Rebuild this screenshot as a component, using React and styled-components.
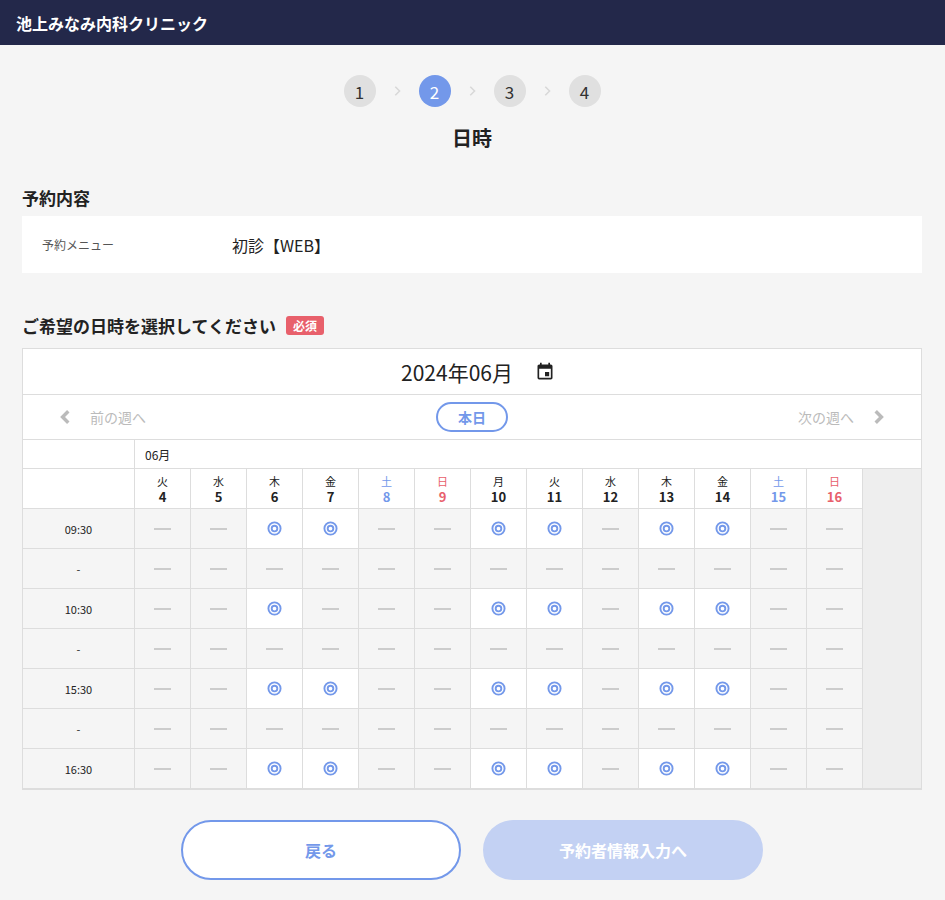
import React from 'react';
import styled, {createGlobalStyle} from 'styled-components';

const Global = createGlobalStyle`
  body { margin: 0; background: #f5f5f5; font-family: 'Noto Sans CJK JP', 'Noto Sans', sans-serif; color: #222; }
`;

const Header = styled.div`
  height: 45px; background: #23284a; color: #fff; font-weight: 700; font-size: 16px;
  display: flex; align-items: center; padding-left: 16px;
`;
const Main = styled.div`padding: 0 23px 0 22px;`;
const Steps = styled.div`display: flex; justify-content: center; align-items: center; margin-top: 30px;`;
const Step = styled.div`
  width: 32px; height: 32px; border-radius: 50%; display: flex; align-items: center; justify-content: center;
  font-size: 17px; background: ${p => p.$active ? '#7398ea' : '#e0e0e0'}; color: ${p => p.$active ? '#fff' : '#333'};
`;
const Chev = styled.span`width: 43px; display: flex; justify-content: center;`;
const Title = styled.h1`text-align: center; font-size: 20px; font-weight: 700; margin: 16px 0 33px;`;
const Section = styled.h2`font-size: 17px; font-weight: 700; margin: 0 0 6px; display: flex; align-items: center; gap: 10px;`;
const Req = styled.span`background: #e8606b; color: #fff; font-size: 12px; padding: 1px 7px; border-radius: 3px;`;
const MenuBox = styled.div`background: #fff; height: 57px; display: flex; align-items: center; padding-left: 20px; margin-bottom: 40px;`;
const MenuLabel = styled.span`font-size: 12px; color: #555; width: 190px;`;
const MenuVal = styled.span`font-size: 16px;`;
const Cal = styled.div`background: #fff; border: 1px solid #ddd; margin-top: 10px;`;
const Month = styled.div`height: 45px; display: flex; justify-content: center; align-items: center; gap: 22px; font-size: 21px; border-bottom: 1px solid #ddd; padding-left: 12px;`;
const Nav = styled.div`height: 44px; display: flex; align-items: center; justify-content: space-between; padding: 0 35px; border-bottom: 1px solid #ddd; font-size: 14px; color: #bbb;`;
const NavSide = styled.span`display: flex; align-items: center; gap: 16px;`;
const Today = styled.span`border: 2px solid #7398ea; color: #7398ea; border-radius: 16px; padding: 3px 20px; font-size: 14px; font-weight: 700;`;
const Grid = styled.div`display: grid; grid-template-columns: 112px repeat(13, 56px) 1fr;`;
const Cell = styled.div`
  box-sizing: border-box; border-right: 1px solid #ddd; border-bottom: 1px solid #ddd; height: ${p => p.$h}px;
  background: ${p => p.$bg || '#fff'}; display: flex; align-items: center; justify-content: center;
  font-size: 11px; color: ${p => p.$c || '#222'};
`;
const MonthCell = styled.div`box-sizing: border-box; grid-column: 2 / 16; height: 29px; border-bottom: 1px solid #ddd; font-size: 12px; display: flex; align-items: center; padding-left: 10px;`;
const DayCell = styled(Cell)`flex-direction: column; line-height: 16px;`;
const DayNum = styled.span`font-size: 13px; font-weight: 700;`;
const Filler = styled.div`grid-column: 15; grid-row: 2 / span 8; background: #eee; border-bottom: 1px solid #ddd;`;
const Dash = styled.span`width: 17px; height: 2px; background: #ccc;`;
const Buttons = styled.div`display: flex; justify-content: center; gap: 22px; margin: 30px 0 24px;`;
const Btn = styled.button`
  width: 280px; height: 60px; border-radius: 30px; font-family: inherit; font-size: 16px; font-weight: 700;
  border: 2px solid ${p => p.$primary ? '#c3d1f3' : '#7398ea'}; background: ${p => p.$primary ? '#c3d1f3' : '#fff'};
  color: ${p => p.$primary ? '#fff' : '#7398ea'};
`;

const days = [['火',4],['水',5],['木',6],['金',7],['土',8],['日',9],['月',10],['火',11],['水',12],['木',13],['金',14],['土',15],['日',16]];
const open = [2,3,6,7,9,10];
const rows = [['09:30',open],['-',[]],['10:30',[2,6,7,9,10]],['-',[]],['15:30',open],['-',[]],['16:30',open]];
const dayColor = d => d === '土' ? '#7398ea' : d === '日' ? '#e8606b' : '#222';

const Ring = () => (
  <svg width="15" height="15" viewBox="0 0 16 16"><circle cx="8" cy="8" r="6.5" fill="none" stroke="#7398ea" strokeWidth="2"/><circle cx="8" cy="8" r="3" fill="none" stroke="#7398ea" strokeWidth="2"/></svg>
);
const Arrow = ({d, c = '#bbb', w = 3, s = 16}) => (
  <svg width={s} height={s} viewBox="0 0 14 14"><path d={d} fill="none" stroke={c} strokeWidth={w}/></svg>
);

export default function App() {
  return (
    <>
      <Global/>
      <Header>池上みなみ内科クリニック</Header>
      <Main>
        <Steps>
          {[1,2,3,4].map((n,i) => <React.Fragment key={n}>{i>0 && <Chev><Arrow d="M5 2 L10 7 L5 12" c="#d8d8d8" w={1.8} s={12}/></Chev>}<Step $active={n===2}>{n}</Step></React.Fragment>)}
        </Steps>
        <Title>日時</Title>
        <Section>予約内容</Section>
        <MenuBox><MenuLabel>予約メニュー</MenuLabel><MenuVal>初診【WEB】</MenuVal></MenuBox>
        <Section>ご希望の日時を選択してください<Req>必須</Req></Section>
        <Cal>
          <Month>2024年06月
            <svg width="20" height="20" viewBox="0 0 24 24"><path fill="#222" d="M17 12h-5v5h5v-5zM16 1v2H8V1H6v2H5c-1.11 0-2 .9-2 2v14a2 2 0 0 0 2 2h14c1.1 0 2-.9 2-2V5c0-1.1-.9-2-2-2h-1V1h-2zm3 18H5V8h14v11z"/></svg>
          </Month>
          <Nav>
            <NavSide><Arrow d="M9 2 L4 7 L9 12"/>前の週へ</NavSide>
            <Today>本日</Today>
            <NavSide>次の週へ<Arrow d="M5 2 L10 7 L5 12"/></NavSide>
          </Nav>
          <Grid>
            <Cell $h={29}/>
            <MonthCell>06月</MonthCell>
            <Cell $h={40}/>
            {days.map(([d,n]) => <DayCell key={n} $h={40} $c={dayColor(d)}><span>{d}</span><DayNum>{n}</DayNum></DayCell>)}
            <Filler/>
            {rows.map(([t,o],r) => (
              <React.Fragment key={r}>
                <Cell $h={40} $bg="#f5f5f5">{t}</Cell>
                {days.map((_,i) => o.includes(i)
                  ? <Cell key={i} $h={40}><Ring/></Cell>
                  : <Cell key={i} $h={40} $bg="#f5f5f5"><Dash/></Cell>)}
              </React.Fragment>
            ))}
          </Grid>
        </Cal>
        <Buttons><Btn>戻る</Btn><Btn $primary>予約者情報入力へ</Btn></Buttons>
      </Main>
    </>
  );
}
